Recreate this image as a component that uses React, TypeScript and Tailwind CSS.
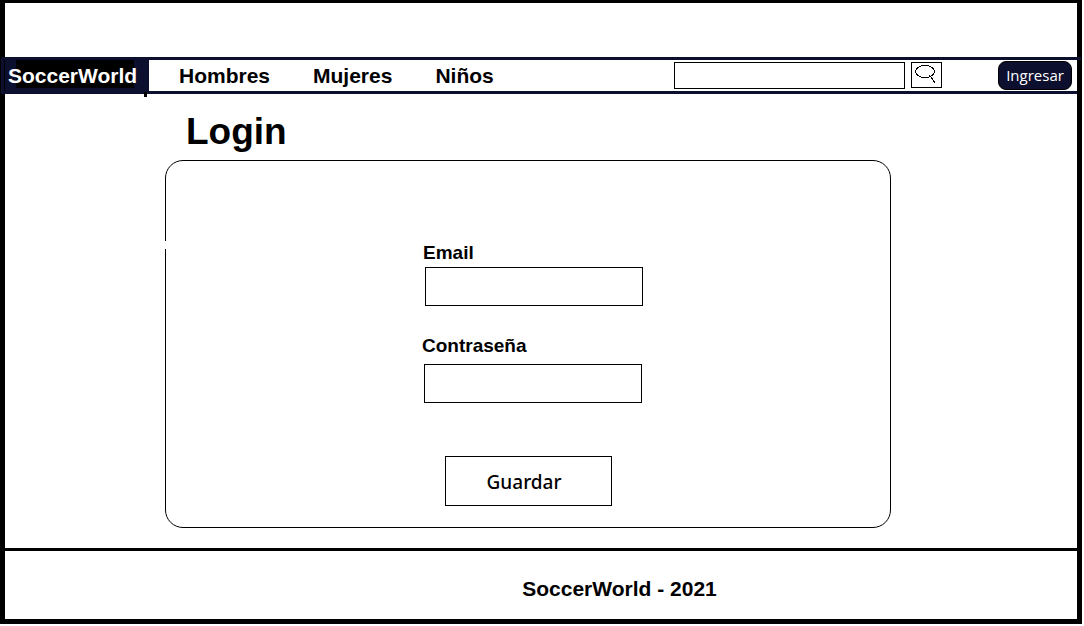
import React from "react";

const sections = ["Hombres", "Mujeres", "Niños"];

function SearchIcon() {
  return (
    <svg width="29" height="24" viewBox="0 0 29 24" fill="none" stroke="#000" strokeWidth="1" shapeRendering="crispEdges" aria-hidden="true">
      <ellipse cx="13" cy="8.5" rx="9.5" ry="6" />
      <path d="M17.5 12.5 L19.5 14.5 L20.5 16.5 L23.5 20.5" />
    </svg>
  );
}

function NavBar() {
  return (
    <nav className="relative -ml-1 flex h-[37px] items-stretch border-y-3 border-[#0d0f2e] bg-white">
      <a href="#" className="relative isolate flex w-[148px] items-center bg-[#0d0f2e] pl-[7px] whitespace-nowrap text-white">
        <span className="absolute inset-y-0 left-[3px] -z-10 w-px bg-black" />
        <span className="absolute top-0 right-[15px] bottom-[3px] left-[15px] -z-10 bg-black" />
        SoccerWorld
      </a>
      <span className="absolute top-8 left-[143px] h-[5px] w-[3px] bg-black" />
      <span className="absolute -top-[3px] -right-1 h-[3px] w-1 bg-[#0d0f2e]" />
      <ul className="flex items-center gap-[43px] pl-[30px]">
        {sections.map((name) => (
          <li key={name}>
            <a href="#">{name}</a>
          </li>
        ))}
      </ul>
      <form className="ml-auto flex items-start gap-1.5 pt-0.5 pr-14" onSubmit={(e) => e.preventDefault()}>
        <input type="search" aria-label="Buscar" className="h-[27px] w-[231px] border border-black bg-white px-2 text-sm font-normal outline-none" />
        <button type="submit" aria-label="Buscar" className="h-[26px] w-[31px] border border-black bg-white">
          <SearchIcon />
        </button>
      </form>
      <button type="button" className="mt-px mr-[5px] h-[29px] w-[74px] rounded-lg border border-black bg-[#0d0f2e] pb-0.5 font-['Open_Sans',sans-serif] text-[15px] leading-5 font-normal text-white">
        Ingresar
      </button>
    </nav>
  );
}

export default function App() {
  return (
    <div className="pr-0.5 pb-0.5 font-['Liberation_Sans',Arial,sans-serif] text-[21px] leading-6 font-bold text-black">
      <div className="border-x-5 border-t-3 border-b-5 border-black bg-white">
        <header className="pt-[54px]">
          <NavBar />
        </header>

        <main className="pr-[186px] pb-5 pl-40">
          <h1 className="pt-[18px] pb-2 pl-[21px] text-[37px] leading-10">Login</h1>
          <form
            className="relative flex flex-col items-center rounded-[18px] border border-black pt-20 pb-[21px] text-[19px]"
            onSubmit={(e) => e.preventDefault()}
          >
            <span className="absolute top-20 -left-px h-2 w-px bg-white" />
            <div className="flex flex-col gap-0.5 pl-2.5">
              <label htmlFor="email">Email</label>
              <input id="email" type="email" className="ml-0.5 h-[39px] w-[218px] border border-black px-2 text-base font-normal outline-none" />
            </div>
            <div className="mt-7 flex flex-col gap-1.5 pl-2">
              <label htmlFor="password">Contraseña</label>
              <input id="password" type="password" className="ml-0.5 h-[39px] w-[218px] border border-black px-2 text-base font-normal outline-none" />
            </div>
            <button type="submit" className="mt-[53px] h-[50px] w-[167px] border border-black pt-0.5 pr-2 font-['Noto_Sans',sans-serif] font-medium">
              Guardar
            </button>
          </form>
        </main>

        <footer className="border-t-3 border-black pt-[26px] pb-[18px] pl-[157px] text-center">SoccerWorld - 2021</footer>
      </div>
    </div>
  );
}
